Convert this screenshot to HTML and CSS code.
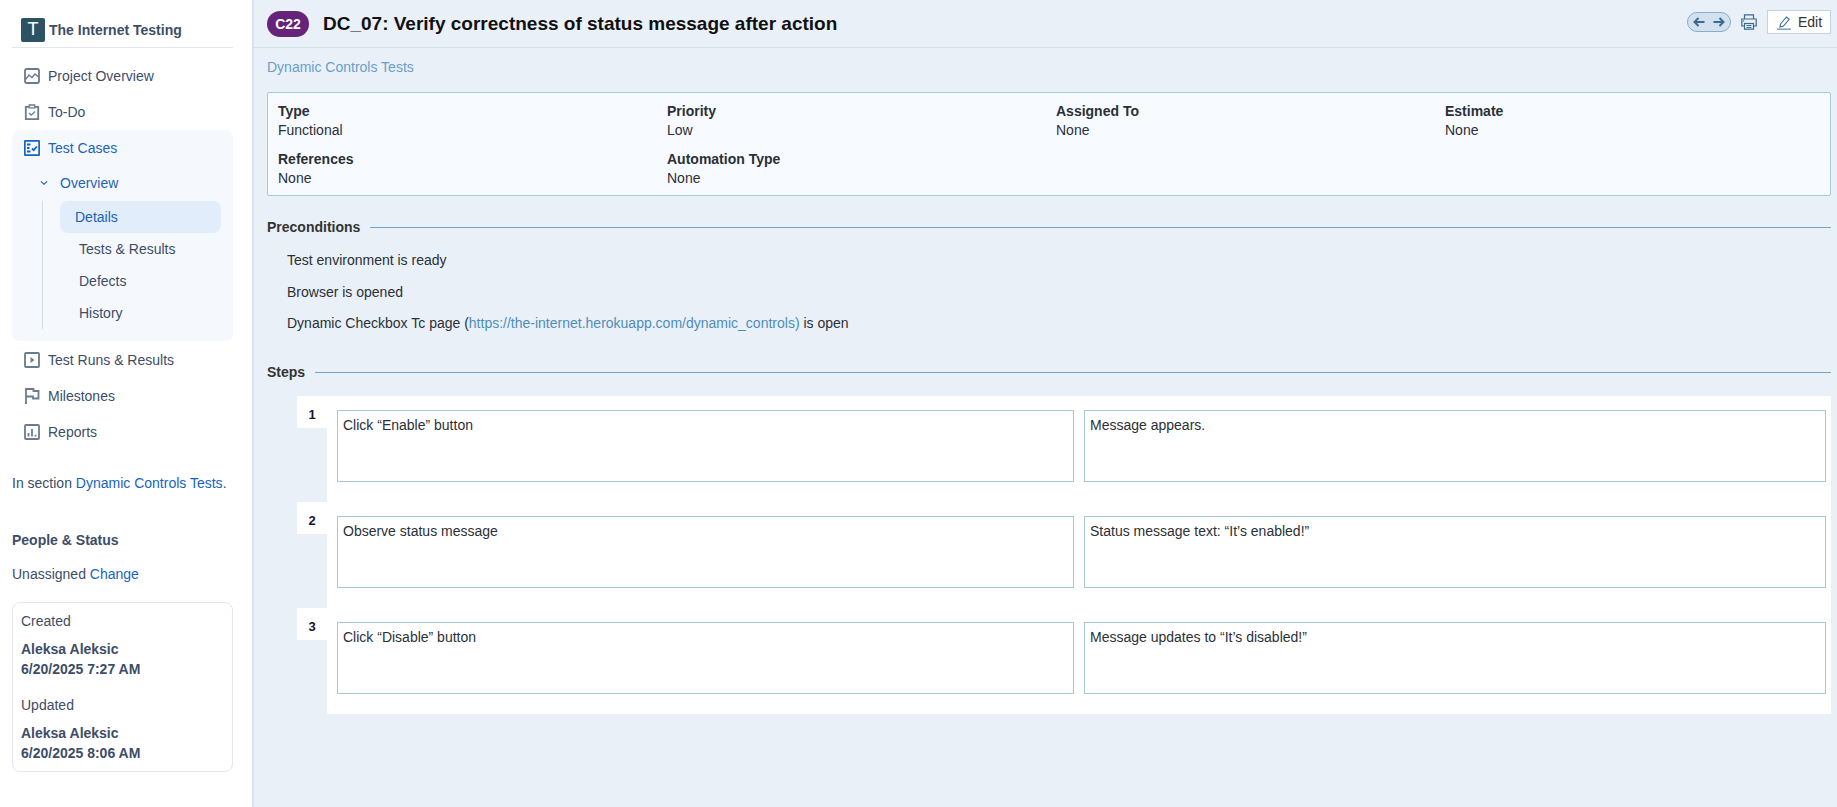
FILE: index.html
```html
<!DOCTYPE html>
<html lang="en">
<head>
<meta charset="utf-8">
<title>C22</title>
<link rel="stylesheet" href="styles.css">
</head>
<body>
<div class="app">
  <aside class="sidebar">
    <div class="brand"><span class="logo">T</span><span class="brand-name">The Internet Testing</span></div>
    <nav class="nav">
      <a class="nav-item"><svg class="ico" viewBox="0 0 16 16"><rect x="1" y="1" width="14" height="14" rx="1.500"/><path class="thin" d="M1.500 11.500 5 7l3 2.500L11 6l3.500 3"/></svg>Project Overview</a>
      <a class="nav-item"><svg class="ico" viewBox="0 0 16 16"><path d="M5 2.800H1.800v12.400h12.400V2.800H11"/><path class="thin" d="M5.200 3.800V1h5.600v2.800z"/><path class="thin" d="m5 9 2.200 2.200L11 7.500"/></svg>To-Do</a>
      <div class="nav-group">
        <a class="nav-item active"><svg class="ico" viewBox="0 0 16 16"><rect x="0.800" y="0.800" width="14.400" height="14.400" rx="1"/><path d="M3 4.500h3.500M3 8h2.500M3 11.500h3.500M8 8.500l1.700 1.700 3.300-3.700"/></svg>Test Cases</a>
        <a class="sub-head"><svg class="chev" viewBox="0 0 10 6"><path d="m1 1 4 3.500L9 1"/></svg>Overview</a>
        <div class="sub-list">
          <a class="sub-item current">Details</a>
          <a class="sub-item">Tests &amp; Results</a>
          <a class="sub-item">Defects</a>
          <a class="sub-item">History</a>
        </div>
      </div>
      <a class="nav-item"><svg class="ico" viewBox="0 0 16 16"><rect x="1" y="1" width="14" height="14" rx="1"/><path class="fill" d="M6.500 5v6L10.500 8z"/></svg>Test Runs &amp; Results</a>
      <a class="nav-item"><svg class="ico" viewBox="0 0 16 16"><path d="M2 16V1h7.500v2h5v7.500H9V8.500H2"/></svg>Milestones</a>
      <a class="nav-item"><svg class="ico" viewBox="0 0 16 16"><rect x="1" y="1" width="14" height="14" rx="1"/><path d="M4.500 12.500V9M8 12.500V5M11.500 12.500v-1.800"/></svg>Reports</a>
    </nav>
    <p class="section-note">In section <a class="link">Dynamic Controls Tests</a>.</p>
    <h3 class="people">People &amp; Status</h3>
    <p class="assign">Unassigned <a class="link">Change</a></p>
    <div class="meta-card">
      <div class="meta-label">Created</div>
      <div class="meta-value">Aleksa Aleksic<br>6/20/2025 7:27 AM</div>
      <div class="meta-label second">Updated</div>
      <div class="meta-value">Aleksa Aleksic<br>6/20/2025 8:06 AM</div>
    </div>
  </aside>
  <main class="main">
    <header class="header">
      <span class="badge">C22</span>
      <h1 class="title">DC_07: Verify correctness of status message after action</h1>
      <div class="tools">
        <span class="pager">
          <svg viewBox="0 0 12 10"><path d="M11.500 5H1.500M5.500 1 1.500 5l4 4"/></svg>
          <svg viewBox="0 0 12 10"><path d="M.5 5h10M6.500 1l4 4-4 4"/></svg>
        </span>
        <svg class="print" viewBox="0 0 16 16"><path d="M3.500 5V.8h9V5M3.500 12H.8V5h14.400v7h-2.700"/><rect x="3.500" y="9.500" width="9" height="5.700"/><path d="M5.500 11.500h5M5.500 13.500h5"/><rect class="dot" x="1.800" y="6.300" width="1.400" height="1.400"/></svg>
        <a class="edit"><svg class="pencil" viewBox="0 0 15 15"><path d="m3.500 9 6-7 2.700 2.300-6 7-3.200 .7z"/><path class="under" d="M0 14.200h14"/></svg>Edit</a>
      </div>
    </header>
    <div class="content">
      <a class="crumb">Dynamic Controls Tests</a>
      <section class="info">
        <div class="field"><b>Type</b><span>Functional</span></div>
        <div class="field"><b>Priority</b><span>Low</span></div>
        <div class="field"><b>Assigned To</b><span>None</span></div>
        <div class="field"><b>Estimate</b><span>None</span></div>
        <div class="field"><b>References</b><span>None</span></div>
        <div class="field"><b>Automation Type</b><span>None</span></div>
      </section>
      <h2 class="rule-head"><span>Preconditions</span></h2>
      <div class="pre">
        <p>Test environment is ready</p>
        <p>Browser is opened</p>
        <p>Dynamic Checkbox Tc page (<a class="pre-link">https://the-internet.herokuapp.com/dynamic_controls)</a> is open</p>
      </div>
      <h2 class="rule-head steps-head"><span>Steps</span></h2>
      <div class="steps">
        <div class="step">
          <div class="num">1</div>
          <div class="step-body"><div class="cell">Click “Enable” button</div><div class="cell">Message appears.</div></div>
        </div>
        <div class="step">
          <div class="num">2</div>
          <div class="step-body"><div class="cell">Observe status message</div><div class="cell">Status message text: “It’s enabled!”</div></div>
        </div>
        <div class="step">
          <div class="num">3</div>
          <div class="step-body"><div class="cell">Click “Disable” button</div><div class="cell">Message updates to “It’s disabled!”</div></div>
        </div>
      </div>
    </div>
  </main>
</div>
</body>
</html>
```
FILE: styles.css
```css
* { box-sizing: border-box; }
html, body { margin: 0; height: 100%; }
body { font: 14px/20px "Liberation Sans", Arial, sans-serif; color: #1f2937; background: #e9f0f7; overflow: hidden; }
a { text-decoration: none; }
p { margin: 0; }
.app { display: flex; height: 807px; }

.sidebar { width: 252px; flex: none; background: #fff; padding: 12px 19px 0 12px; color: #3d4d68; }
.brand { display: flex; align-items: center; gap: 4px; height: 35px; margin-left: 9px; }
.logo { width: 24px; height: 24px; border-radius: 2px; background: #2c5364; color: #fff; font-size: 18px; line-height: 22px; text-align: center; }
.brand-name { font-weight: 700; color: #3d4d68; }
.nav { border-top: 1px solid #e2e6ee; padding-top: 10px; display: flex; flex-direction: column; }
.nav-item { display: flex; align-items: center; height: 36px; padding-left: 12px; gap: 8px; color: #3d4d68; }
.nav-group { background: #f5f9fe; border-radius: 8px; padding-bottom: 12px; margin-bottom: 1px; }
.nav-item.active { color: #1d63b8; }
.ico { width: 16px; height: 16px; flex: none; fill: none; stroke: #6b7a90; stroke-width: 1.800; }
.ico .thin { stroke-width: 1.300; }
.ico .fill { fill: #6b7a90; stroke: none; }
.active .ico { stroke: #1565c0; }
.sub-head { display: flex; align-items: center; height: 35px; padding: 0 0 2px 28px; gap: 12px; color: #1d63b8; }
.chev { width: 8px; height: 6px; fill: none; stroke: #1d63b8; stroke-width: 1.400; }
.sub-list { margin-left: 30px; border-left: 1px solid #d6dce4; width: 179px; }
.sub-item { display: block; height: 32px; line-height: 32px; margin-left: 17px; padding-left: 19px; color: #3d4d68; }
.sub-item.current { background: #e1edfb; border-radius: 8px; padding-left: 15px; color: #1d63b8; }
.link { color: #1565c0; }
.section-note { margin-top: 23px; }
.people { margin: 37px 0 0; font-size: 14px; font-weight: 700; line-height: 20px; color: #3d4d68; }
.assign { margin-top: 14px; }
.meta-card { margin-top: 18px; border: 1px solid #e2e6ee; border-radius: 8px; padding: 8px; height: 170px; }
.meta-label.second { margin-top: 16px; }
.meta-value { margin-top: 8px; font-weight: 700; }

.main { flex: 1; min-width: 0; display: flex; flex-direction: column; border-left: 2px solid #d9e4ee; }
.header { display: flex; align-items: center; height: 48px; padding: 0 6px 0 13px; border-bottom: 1px solid #d3e0ea; }
.badge { width: 42px; height: 26px; border-radius: 13px; background: #66237a; color: #fff; font-size: 14px; font-weight: 700; line-height: 26px; text-align: center; }
.title { margin: 0 0 0 14px; font-size: 19px; font-weight: 700; color: #111; line-height: 26px; flex: 1; }
.tools { display: flex; align-items: center; margin-bottom: 3px; }
.pager { display: flex; align-items: center; justify-content: center; gap: 8px; width: 44px; height: 20px; background: #d2e1ed; border: 1px solid #86aecd; border-radius: 10px; }
.pager svg { width: 12px; height: 10px; fill: none; stroke: #3a6a8f; stroke-width: 2; }
.print { width: 16px; height: 16px; margin: 0 10px; fill: none; stroke: #3a6a8f; stroke-width: 1.200; }
.print .dot { fill: #2aa58c; stroke: none; }
.edit { display: flex; align-items: center; gap: 6px; height: 24px; width: 64px; padding-left: 9px; background: #fff; border: 1px solid #c2d4e4; color: #333; font-size: 14px; }
.pencil { width: 15px; height: 15px; fill: none; stroke: #3a6a8f; stroke-width: 1.100; }
.pencil .under { stroke: #7fa7c9; stroke-width: 1.600; }

.content { padding: 0 6px 0 13px; }
.crumb { display: block; margin-top: 9px; color: #6b9fc8; }
.info { display: grid; grid-template-columns: repeat(4, 389px); grid-auto-rows: 48px; margin-top: 15px; height: 104px; padding: 3px 10px; background: #f7fbff; border: 1px solid #a8c8dd; border-radius: 2px; color: #2b2f36; }
.field { display: flex; flex-direction: column; line-height: 19px; padding-top: 6px; }
.field b { font-weight: 700; }
.rule-head { display: flex; align-items: center; gap: 10px; margin: 21px 0 0; font-size: 14px; font-weight: 700; color: #333; line-height: 20px; }
.rule-head::after { content: ""; flex: 1; height: 1px; background: #6fa5cc; }
.pre { padding: 10px 0 0 20px; color: #2b2f36; }
.pre p { height: 31.500px; padding-top: 3px; }
.pre-link { color: #4f8db8; }
.steps-head { margin-top: 20.500px; }
.steps { margin: 14px 0 0 30px; }
.step { display: flex; height: 106px; }
.num { width: 30px; height: 32px; flex: none; background: #fff; font-size: 13px; font-weight: 700; text-align: center; padding-top: 12px; line-height: 14px; color: #1a1230; }
.step-body { flex: 1; display: grid; grid-template-columns: 737px 742px; gap: 10px; background: #fff; padding: 14px 5px 20px 10px; }
.cell { background: #fff; border: 1px solid #a9c6da; padding: 4px 5px; height: 72px; color: #2b2f36; }
```
